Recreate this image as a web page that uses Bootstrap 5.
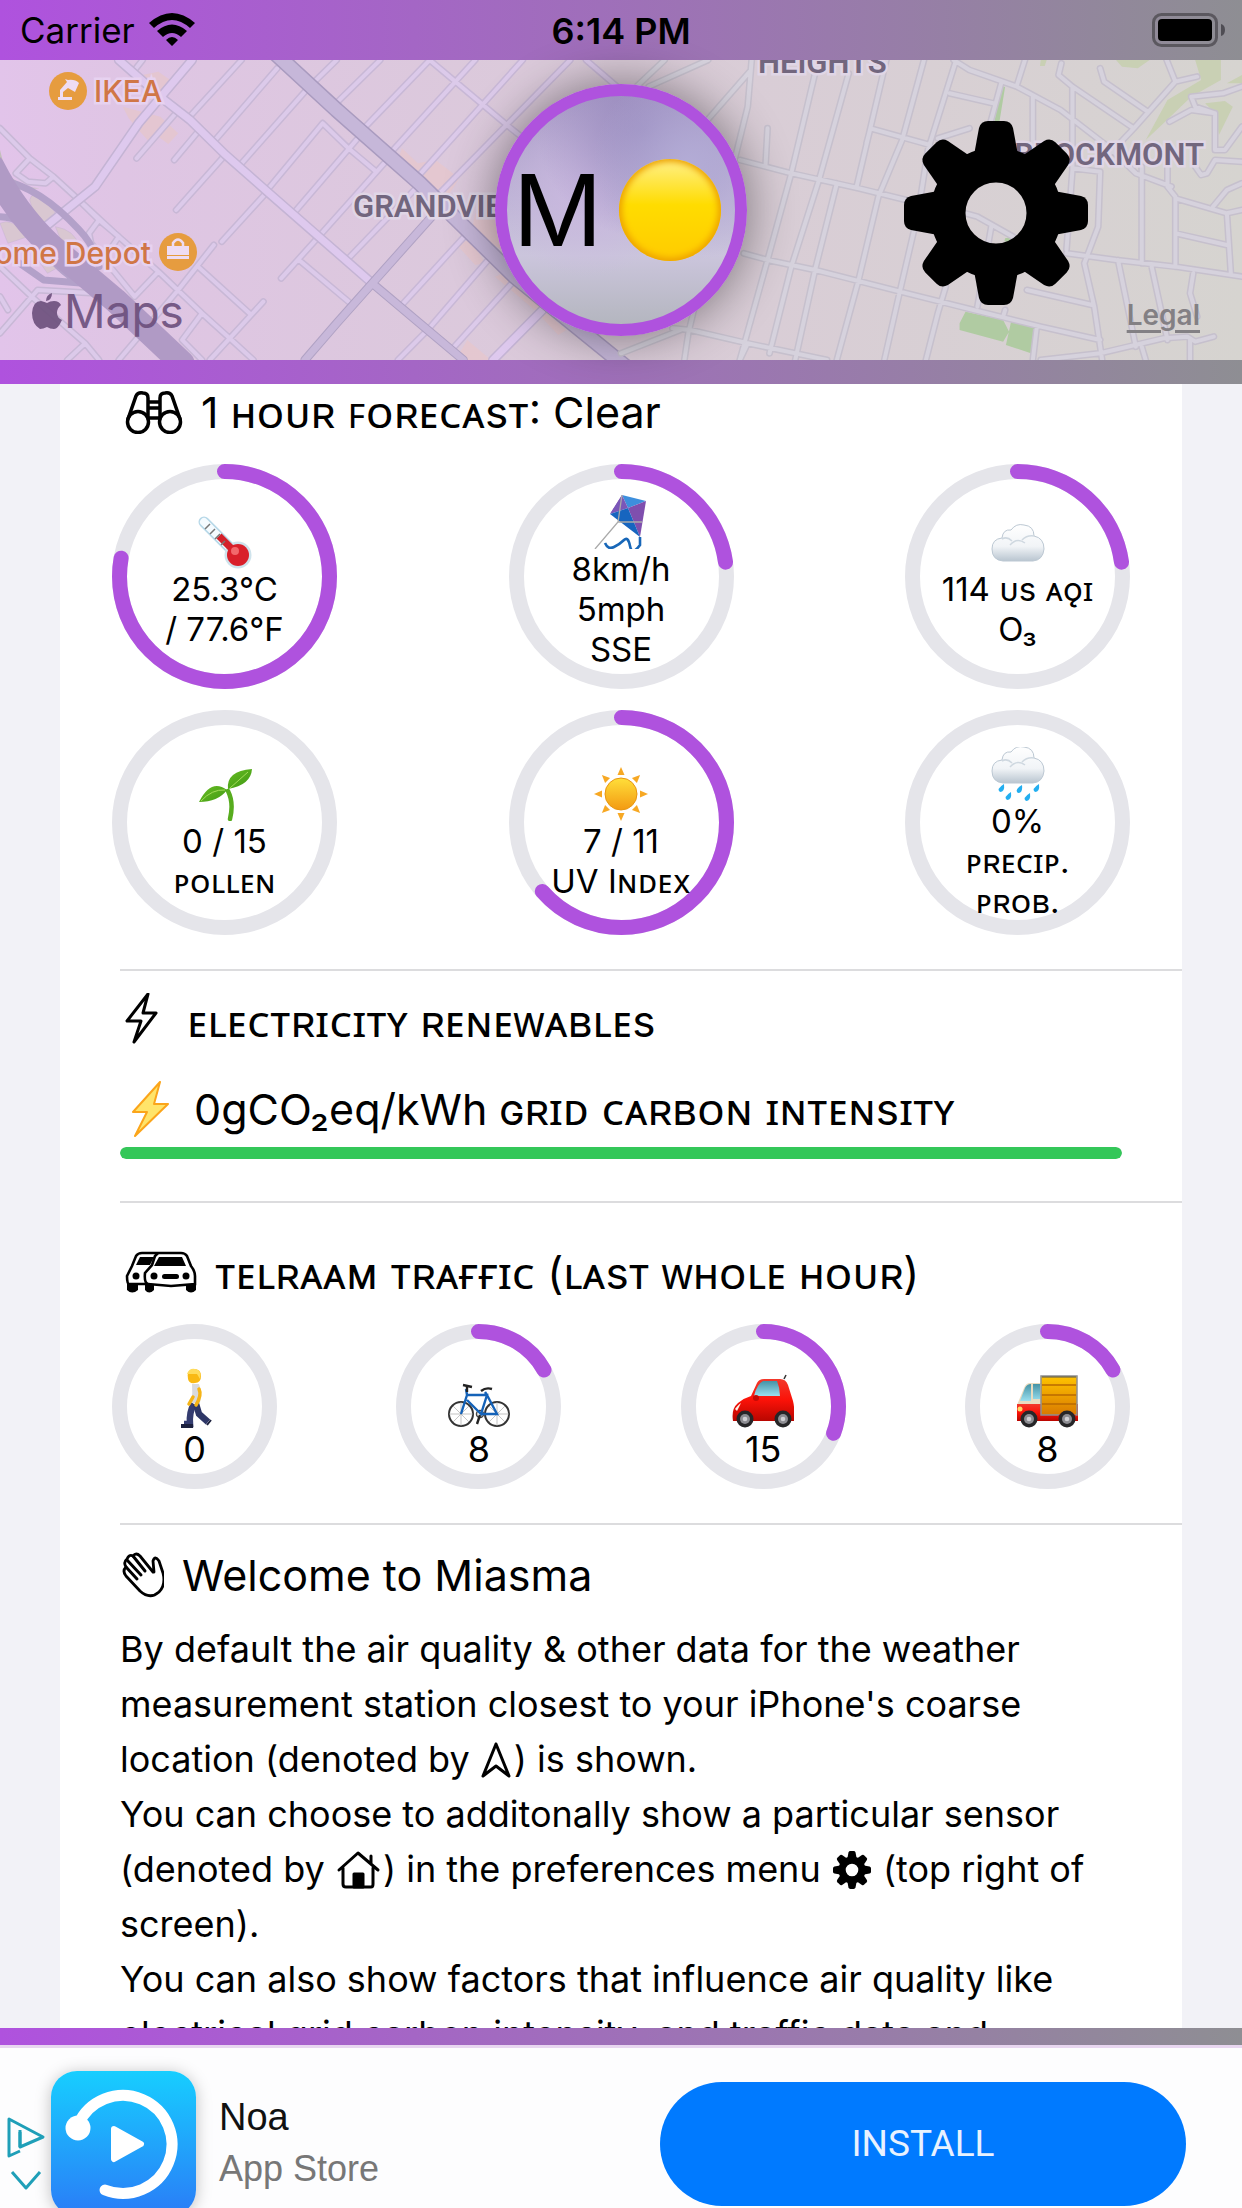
<!DOCTYPE html>
<html lang="en">
<head>
<meta charset="utf-8">
<meta name="viewport" content="width=device-width, initial-scale=1">
<title>Miasma</title>
<link href="https://cdn.jsdelivr.net/npm/bootstrap@5.3.0/dist/css/bootstrap.min.css" rel="stylesheet">
<style>
  :root { --violet: #af52de; --steel: #8e8e93; --track: #e5e5ea; }
  body { font-family: Inter, "Noto Sans", "DejaVu Sans", sans-serif; color: #000; background: #f2f2f7; }
  .tint { background: linear-gradient(90deg, var(--violet), var(--steel)); }
  .status-row { height: 60px; font-size: 35px; line-height: 62px; padding: 0 16px; }
  .status-side { flex: 1 1 0; }
  .status-time { font-size: 36px; }
  .map-area { height: 300px; }
  .map-clip { position: absolute; inset: 0; overflow: hidden; }
  .map-clip svg { width: 100%; height: 100%; display: block; }
  .street { fill: none; vector-effect: non-scaling-stroke; stroke-linecap: round; stroke-linejoin: round; }
  .poi { font: 500 30px Inter, sans-serif; fill: #d07646; stroke: #e7d2f0; stroke-width: 5px; paint-order: stroke; }
  .district { font: 600 31px Roboto, sans-serif; fill: #72667e; stroke: #e0d6e6; stroke-width: 5px; paint-order: stroke; }
  .maps-mark { font: 400 46px Inter, sans-serif; fill: #6c4f7c; }
  .orb { position: absolute; left: 50%; top: 24px; width: 252px; height: 252px; margin-left: -126px; border: 12px solid var(--violet); border-radius: 50%;
    background: radial-gradient(circle at 80% 30%, #b3acd6 0, transparent 40%), radial-gradient(circle at 60% 15%, #9a8cbf 0, transparent 45%), radial-gradient(circle at 35% 40%, #cbb9e0 0, transparent 45%), linear-gradient(#a899c6, #beb4d6 45%, #cbc5dc 70%, #b4b6bf);
    box-shadow: 0 0 50px rgba(0,0,0,.45); font-size: 99px; line-height: 1; padding: 0 14px 0 6px; }
  .moon { width: 102px; height: 102px; border-radius: 50%; background: linear-gradient(#fff08a, #ffdc00 45%, #ffcb00); box-shadow: inset 0 0 6px 3px #eda200; }
  .gear-btn { position: absolute; right: 154px; top: 61px; width: 184px; height: 184px; padding: 0; border: 0; background: none; }
  .legal-link { position: absolute; right: 42px; top: 237px; font-size: 28px; line-height: 36px; font-weight: 600; color: #838084; text-underline-offset: 5px; text-decoration-thickness: 3px; }
  .bar-top { height: 24px; }
  .bar-bottom { height: 17px; }
  .scroller { min-height: 0; overflow: hidden; }
  .panel { background: #fff; margin: 0 60px; }
  .title-row { font-size: 43px; line-height: 60px; padding-left: 60px; gap: 18px; }
  .title-row svg { flex: none; }
  .first-title { line-height: 56px; }
  .caps-text { font-size: 44px; }
  .rings { margin: 0 52px; }
  .ring { position: relative; width: 225px; height: 225px; font-size: 33px; line-height: 40px; text-align: center; }
  .ring-low { padding-top: 12px; }
  .ring-sm { width: 165px; height: 165px; font-size: 36px; padding-top: 22px; }
  .ring > .dial { position: absolute; inset: 0; width: 100%; height: 100%; transform: rotate(-90deg); }
  .dial circle { fill: none; stroke-width: 15; stroke-linecap: round; }
  .dial .base { stroke: var(--track); }
  .dial .val { stroke: var(--violet); }
  .ring > div { position: relative; white-space: nowrap; }
  .glyph { width: 54px; height: 54px; margin-top: 10px; }
  .ring-sm .glyph { width: 62px; height: 62px; margin-top: 0; }
  .rule { margin-left: 60px; height: 2px; background: #dcdcde; }
  .intensity { height: 12px; margin: 8px 60px 42px; border-radius: 6px; background: var(--track); }
  .intensity .progress-bar { background: #34c759; border-radius: 6px; }
  .story { font-size: 36px; line-height: 55px; margin: 17px 56px 0 60px; }
  .story svg { vertical-align: -7px; }
  .promo { height: 163px; background: #fdfdfe; border-top: 3px solid #e8d6f0; font-family: Roboto, sans-serif; padding: 0 56px 0 51px; overflow: hidden; position: relative; }
  .promo-icon { margin-top: 23px; border-radius: 26px; box-shadow: 0 2px 16px rgba(0,0,0,.25); flex: none; }
  .promo-text { margin: 43px 0 0 23px; line-height: 52px; font-family: "Liberation Sans", sans-serif; }
  .promo-name { font-size: 38px; color: #111; }
  .promo-sub { font-size: 36px; color: #777; }
  .install-btn { width: 526px; height: 124px; margin-top: 34px; border: 0; border-radius: 62px; background: #007aff; color: #e8f2ff; font-size: 37px; }
  .choices { position: absolute; left: 6px; top: 68px; }
</style>
</head>
<body>
<svg width="0" height="0" class="position-absolute" aria-hidden="true">
  <defs>
    <path id="tooth" d="M-22-58-17-85Q-15-92-8-92H8Q15-92 17-85L22-58Z"/>
    <symbol id="gear" viewBox="-92 -92 184 184">
      <circle r="48" fill="none" stroke="#000" stroke-width="35"/>
      <use href="#tooth"/><use href="#tooth" transform="rotate(45)"/><use href="#tooth" transform="rotate(90)"/><use href="#tooth" transform="rotate(135)"/>
      <use href="#tooth" transform="rotate(180)"/><use href="#tooth" transform="rotate(225)"/><use href="#tooth" transform="rotate(270)"/><use href="#tooth" transform="rotate(315)"/>
    </symbol>
    <linearGradient id="cloudFill" x2="0" y2="1"><stop offset="0" stop-color="#fff"/><stop offset=".6" stop-color="#f1f4f7"/><stop offset="1" stop-color="#b9c5d0"/></linearGradient>
    <linearGradient id="leafFill" x2="1" y2="1"><stop offset="0" stop-color="#7ccf2a"/><stop offset="1" stop-color="#2f8a0e"/></linearGradient>
    <linearGradient id="sunFill" x2="0" y2="1"><stop offset="0" stop-color="#ffdf3a"/><stop offset="1" stop-color="#f39a12"/></linearGradient>
    <linearGradient id="loadFill" x2="0" y2="1"><stop offset="0" stop-color="#ffc400"/><stop offset="1" stop-color="#d97a00"/></linearGradient>
    <linearGradient id="glassFill" x2="0" y2="1"><stop offset="0" stop-color="#4593a6"/><stop offset="1" stop-color="#9adfee"/></linearGradient>
    <linearGradient id="redFill" x2="0" y2="1"><stop offset="0" stop-color="#f2392c"/><stop offset=".5" stop-color="#fb1208"/><stop offset="1" stop-color="#b80600"/></linearGradient>
    <linearGradient id="appFill" x2="0" y2="1"><stop offset="0" stop-color="#17ceff"/><stop offset="1" stop-color="#2a7cf7"/></linearGradient>
    <linearGradient id="ground" x2="1" y2="0"><stop offset="0" stop-color="#e2c4ea"/><stop offset=".1" stop-color="#dfc5e4"/><stop offset=".5" stop-color="#dacbd8"/><stop offset="1" stop-color="#d6d4d0"/></linearGradient>
    <g id="cloud"><path d="M12 46Q1 45 1 34 1 24 11 23 12 14 20 15 25 8 33 10 43 11 43 21 53 23 53 34 52 45 42 46Z" fill="url(#cloudFill)" stroke="#bcc8d3" stroke-width="1"/><path d="M11 24Q16 21 21 26M19 30Q26 22 34 28M31 25Q36 20 43 21" fill="none" stroke="#cfd8e0" stroke-width="1.5"/></g>
    <g id="wheel"><circle r="8.5" fill="#262628"/><circle r="5" fill="#8d8d92"/><circle r="2.3" fill="#d0d0d4"/></g>
    <path id="streetsWest" class="street" d="M0 385 75 475 135 530 190 590 290 700 400 815 510 940 580 1015 640 1080M610 180 475 355M440 345 345 475M500 395 440 480M700 205 540 425M770 275 610 490M815 370 675 570M900 420 745 635M970 490 805 710M1050 565 880 775M1180 700 1015 915M1240 770 1080 990 1005 1080M1300 840 1140 1050M565 470 445 630M675 575 560 725M805 710 710 835M755 780 880 905M815 370 880 445 950 515M790 250 850 180M840 320 960 180M915 390 1085 180M985 460 1200 180M1055 530 1320 180M1110 580 1440 180M1085 180 1220 315 1290 385 1380 470M1480 180 1568 270M540 735 450 870 300 1080M500 800 630 940M665 905 580 1015 530 1080M400 815 340 890M510 940 460 1020 510 1080M75 475 40 520 70 545 115 550 135 530M190 590 250 660 225 700 230 730 340 890M250 660 300 710 260 780M0 800 80 890 215 1030 250 1080M240 880 95 870 0 1000M215 1030 170 1080M0 890 20 930M360 180 340 210"/>
    <path id="streetsEast" class="street" d="M490 220 430 520 370 780 300 1080M575 220 500 540 430 800 375 1060M670 180 595 560M545 550 490 810 440 1080M765 180 710 420 650 590 600 840 545 1080M845 185 775 450 750 640 705 870 665 1080M960 250 930 380M1020 180 1000 255M840 180 880 210 1000 260 1110 330 1230 440 1300 520 1390 560M830 280 940 310M630 385 780 435M630 385 620 430M880 385 800 415M300 480 430 520 600 565 720 600M310 760 370 780 490 810 705 875 890 930 1060 980 1210 1020M370 385 365 495M110 180 30 270M220 180 70 260M325 215 130 480M330 180 320 320 270 560M130 985 175 990 320 1030 520 1080M200 850 170 1000 160 1080M150 990 0 1060M320 1030 300 1080M1040 290V470M1140 260V510L1125 750M1112 190 1105 225 1140 260 1295 385M1210 205 1220 245 1330 335M1378 180 1400 245 1295 385 1235 460M1400 245 1455 230M1140 505 1210 515 1205 680 1170 790 1195 920 1215 1080M1315 500V790M1380 500V560L1400 590V800M1400 595 1530 640 1568 630M1400 700 1530 735M1530 640 1540 820M1125 760 1250 780 1400 800 1568 830M1255 780 1300 1040M1340 800 1380 1020M1445 820 1437 880 1455 950M1025 870 1190 915M1060 1080 1210 1060 1370 1015 1430 1010 1450 1025 1497 1010M1500 340 1440 330 1385 365M1568 260 1520 280 1440 290 1450 320 1500 340V450L1525 450 1568 380M1450 500 1465 525 1480 520 1500 480 1568 485M870 640 900 650 990 710 1000 740M935 680 900 920M820 860 800 940 770 1080M970 930 965 950M1050 980 1040 1080M1437 1020V1080M1315 1040 1325 1080M1495 620 1530 570 1568 550"/>
  </defs>
</svg>

<div class="vh-100 d-flex flex-column overflow-hidden">
  <header class="position-relative">
    <div class="status-row tint d-flex">
      <div class="status-side d-flex align-items-center gap-3"><span class="ms-1">Carrier</span>
        <svg width="46" height="34" viewBox="2 0 46 34" overflow="visible" aria-label="Wi-Fi"><path d="M0 10Q23-10 46 10L41 15Q23-1 5 15ZM8 18Q23 5 38 18L32 24Q23 16 14 24ZM23 33 17 27Q23 21 29 27Z"/></svg></div>
      <div class="status-time fw-semibold">6:14 PM</div>
      <div class="status-side d-flex align-items-center justify-content-end">
        <svg width="74" height="34" viewBox="0 0 74 34" aria-label="Battery"><rect x="1.5" y="1.5" width="63" height="31" rx="8" fill="none" stroke="#5b585f" stroke-width="3"/><rect x="6" y="6" width="54" height="22" rx="4"/><path d="M69 11Q73 12 73 17T69 23Z" fill="#4f4d54"/></svg></div>
    </div>

    <div class="map-area position-relative">
      <div class="map-clip">
        <svg viewBox="0 60 1242 300" preserveAspectRatio="xMidYMid slice" role="img" aria-label="Map">
          <rect y="60" width="1242" height="300" fill="url(#ground)"/>
          <g transform="scale(.396 .3333)" fill="#e6c7cd" opacity=".8"><path d="M360 225 400 215 430 240 420 290 380 300ZM310 320 405 350 450 400 425 432 400 410 380 430 350 390 325 355ZM1015 445 1055 490 1100 480 1160 535 1130 590 1075 570 1005 480ZM1150 730 1190 720 1225 790 1200 795ZM1200 640 1270 660V750L1190 700ZM1250 830 1290 810 1370 930 1430 990 1410 1005 1350 930ZM1150 1080 1180 1020 1240 1080Z"/><path d="M0 450 15 520 60 560 100 565 30 570 0 500Z" fill="#bdbfb0"/><path d="M75 600Q80 570 110 600 150 640 140 660 110 670 90 660ZM140 680Q190 690 200 740L160 740ZM0 670Q30 650 70 710L20 730ZM90 770Q130 750 150 800L120 820Z" fill="#d8c8cc" stroke="#b6a8ca"/></g>
          <g transform="translate(621) scale(.396 .3333)" fill="#c9d0b4"><path d="M1450 180H1515V240L1440 290 1370 370 1325 420 1380 300 1465 240ZM1475 310 1525 303 1545 320 1510 405 1500 340ZM1250 180H1335L1305 205 1265 200ZM1060 180H1075L1070 198H1058ZM1530 250 1568 225V250Z"/><path fill="#b0cba2" d="M960 260H970L955 370H942ZM855 970 870 935 965 960 980 995 965 1025 855 990ZM985 965 1058 980 1035 1060 972 1035ZM970 715 985 712V728L968 724Z"/></g>
          <g fill="none">
            <g transform="scale(.396 .3333)">
              <use href="#streetsWest" stroke="#c8b8d6" stroke-width="7"/>
              <use href="#streetsWest" stroke="#dccaea" stroke-width="4"/>
              <path class="street" stroke="#c4b4d4" stroke-width="10" d="M300 180 415 300 480 360 570 465 675 575 805 710 940 850M485 180 350 370 240 560 115 680M1370 930 1245 1080"/>
              <path class="street" stroke="#dec9ee" stroke-width="7" d="M300 180 415 300 480 360 570 465 675 575 805 710 940 850M485 180 350 370 240 560 115 680M1370 930 1245 1080"/>
              <path class="street" stroke="#b0a2c4" stroke-width="9" d="M1090 650 940 850 850 970 770 1080M940 850 1080 990 1170 1080"/>
              <path class="street" stroke="#c8b8da" stroke-width="7" d="M1090 650 940 850 850 970 770 1080M940 850 1080 990 1170 1080"/>
              <path class="street" stroke="#a99bbf" stroke-width="16" d="M695 160 850 330 1060 550 1300 830 1580 1100"/>
              <path class="street" stroke="#c6b7d9" stroke-width="13" d="M695 160 850 330 1060 550 1300 830 1580 1100"/>
              <path class="street" stroke="#b3a1c9" stroke-width="7" d="M0 540Q100 560 200 690 240 740 250 800M0 650Q60 650 100 730 150 820 210 850L110 840 50 790"/>
              <path class="street" stroke="#b09ac5" stroke-width="25" d="M-20 500Q40 640 130 740L290 900 460 1090"/>
            </g>
            <g transform="translate(621) scale(.396 .3333)">
              <use href="#streetsEast" stroke="#c6c0cd" stroke-width="7"/>
              <use href="#streetsEast" stroke="#d6d2dd" stroke-width="4"/>
            </g>
          </g>
          <g><circle cx="68" cy="91" r="19" fill="#e69c3f"/><path d="M58 97H72V100H58ZM60 97V90L67 82 65 79 68 80Q75 79 79 83L75 92 68 88 63 92V97Z" fill="#eedcf3"/></g>
          <text class="poi" x="94" y="102">IKEA</text>
          <text class="poi" x="151" y="264" text-anchor="end">Home Depot</text>
          <g><circle cx="178" cy="252" r="19" fill="#e69c3f"/><path d="M167 246H189V255H167ZM167 256H189V259H167Z" fill="#eedcf3"/><path d="M173 246V243Q178 236 183 243V246" fill="none" stroke="#eedcf3" stroke-width="2.5"/></g>
          <text class="district" x="353" y="217">GRANDVIEW</text>
          <text class="district" x="758" y="73">HEIGHTS</text>
          <text class="district" x="1204" y="165" text-anchor="end">BROCKMONT</text>
          <g opacity=".9"><path d="M52 293Q52 300 46 301 46 295 52 293ZM47 303Q50 301 54 301 59 301 61 305 57 308 57 313 57 318 62 320 58 329 54 329 50 329 47 327 43 329 40 329 32 324 32 313 33 301 41 301 45 302 47 303Z" fill="#6c4f7c"/><text class="maps-mark" x="64" y="328">Maps</text></g>
        </svg>
      </div>
      <div class="orb d-flex align-items-center justify-content-between"><span>M</span><span class="moon"></span></div>
      <button class="gear-btn" type="button" aria-label="Preferences"><svg width="184" height="184"><use href="#gear"/></svg></button>
      <a class="legal-link" href="#legal">Legal</a>
    </div>
    <div class="bar-top tint"></div>
  </header>

  <main class="scroller flex-grow-1">
    <div class="panel">
      <h1 class="title-row first-title d-flex align-items-center fw-normal m-0">
        <svg width="63" height="44" viewBox="-4 0 63 44" fill="none" stroke="#000" stroke-width="3.5" stroke-linecap="round"><circle cx="14" cy="32" r="10.5"/><circle cx="46" cy="32" r="10.5"/><path d="M4 29 12 6Q14 2 19 3 24 3 24 8V29M56 29 48 6Q46 2 41 3 36 3 36 8V29M24 12H36M24 18H36M24 28H36"/></svg>
        <span>1 <span class="caps-text">ʜᴏᴜʀ ꜰᴏʀᴇᴄᴀsᴛ</span>: Clear</span>
      </h1>
      <div class="rings d-flex justify-content-between mt-4">
        <div class="ring d-flex flex-column align-items-center justify-content-center">
          <svg class="dial" viewBox="0 0 225 225"><circle class="base" cx="112.5" cy="112.5" r="105"/><circle class="val" cx="112.5" cy="112.5" r="105" pathLength="100" stroke-dasharray="77.8 100"/></svg>
          <svg class="glyph" viewBox="0 0 54 54"><path d="M6 7 40 41" stroke="#b7d8e8" stroke-width="11" stroke-linecap="round"/><path d="M6 7 38 39" stroke="#f5fbff" stroke-width="8" stroke-linecap="round"/><circle cx="40" cy="40" r="13.5" fill="#cfe3ec"/><path d="M21 21 40 40" stroke="#d4202a" stroke-width="7"/><circle cx="40" cy="40" r="11" fill="#d91f2a"/><circle cx="37" cy="36" r="4" fill="#f2686c"/><path d="M7 14 12 9M12 19 17 14M17 24 22 19M23 30 27 26" stroke="#777" stroke-width="1.5"/></svg>
          <div>25.3°C</div><div>/ 77.6°F</div>
        </div>
        <div class="ring d-flex flex-column align-items-center justify-content-center">
          <svg class="dial" viewBox="0 0 225 225"><circle class="base" cx="112.5" cy="112.5" r="105"/><circle class="val" cx="112.5" cy="112.5" r="105" pathLength="100" stroke-dasharray="22.8 100"/></svg>
          <svg class="glyph" viewBox="0 0 54 54"><path d="M28 0 16 19 26 8Z" fill="#8652b5"/><path d="M28 0 52 6 34 13Z" fill="#3d8fdd"/><path d="M28 0 34 13 16 19Z" fill="#7a56b8"/><path d="M52 6 46 42 34 13Z" fill="#7f4fae"/><path d="M34 13 46 42 16 19Z" fill="#1765bf"/><path d="M28 0 24 27 1 54M24 27H48" stroke="#aaa" stroke-width="1.3" fill="none"/><path d="M11 48Q14 55 20 52T30 45 36 51 46 50V42" fill="none" stroke="#1867b8" stroke-width="2.6"/></svg>
          <div>8km/h</div><div>5mph</div><div>SSE</div>
        </div>
        <div class="ring d-flex flex-column align-items-center justify-content-center">
          <svg class="dial" viewBox="0 0 225 225"><circle class="base" cx="112.5" cy="112.5" r="105"/><circle class="val" cx="112.5" cy="112.5" r="105" pathLength="100" stroke-dasharray="22.8 100"/></svg>
          <svg class="glyph" viewBox="0 0 54 54"><use href="#cloud"/></svg>
          <div>114 ᴜs ᴀǫɪ</div><div>O₃</div>
        </div>
      </div>
      <div class="rings d-flex justify-content-between" style="margin-top:21px">
        <div class="ring ring-low d-flex flex-column align-items-center justify-content-center">
          <svg class="dial" viewBox="0 0 225 225"><circle class="base" cx="112.5" cy="112.5" r="105"/></svg>
          <svg class="glyph" viewBox="0 0 54 54"><path d="M30 24Q36 36 32 52" fill="none" stroke="#57ac1e" stroke-width="4.5" stroke-linecap="round"/><path d="M30 22Q28 4 54 2 53 18 30 22ZM29 23Q13 11 1 35 20 35 29 23Z" fill="url(#leafFill)"/><path d="M32 21 50 5M27 23Q14 22 3 34" stroke="#a4dd5a" stroke-width="1" fill="none"/></svg>
          <div>0 / 15</div><div>ᴘᴏʟʟᴇɴ</div>
        </div>
        <div class="ring ring-low d-flex flex-column align-items-center justify-content-center">
          <svg class="dial" viewBox="0 0 225 225"><circle class="base" cx="112.5" cy="112.5" r="105"/><circle class="val" cx="112.5" cy="112.5" r="105" pathLength="100" stroke-dasharray="63.6 100"/></svg>
          <svg class="glyph" viewBox="-27 -27 54 54" fill="#f7a823"><circle r="16" fill="url(#sunFill)" stroke="#e8960f"/><g id="ray2"><path id="ray" d="M-3.5-19 0-27 3.5-19Z"/><use href="#ray" transform="rotate(45)"/></g><use href="#ray2" transform="rotate(90)"/><use href="#ray2" transform="rotate(180)"/><use href="#ray2" transform="rotate(270)"/></svg>
          <div>7 / 11</div><div>UV Iɴᴅᴇx</div>
        </div>
        <div class="ring ring-low d-flex flex-column align-items-center justify-content-center">
          <svg class="dial" viewBox="0 0 225 225"><circle class="base" cx="112.5" cy="112.5" r="105"/></svg>
          <svg class="glyph" viewBox="0 0 54 54"><use href="#cloud" y="-10"/><g fill="#22aef0"><path id="drop" d="M13 37Q14 45 9 45 5 42 13 37Z"/><use href="#drop" x="7" y="8"/><use href="#drop" x="18" y="1"/><use href="#drop" x="26" y="9"/><use href="#drop" x="35"/></g></svg>
          <div>0%</div><div>ᴘʀᴇᴄɪᴘ.</div><div>ᴘʀᴏʙ.</div>
        </div>
      </div>
      <div class="rule" style="margin-top:34px"></div>

      <h2 class="title-row d-flex align-items-center fw-normal mb-0" style="margin-top:20px">
        <svg width="49" height="56" viewBox="-5 2 49 56" fill="none" stroke="#000" stroke-width="3" stroke-linejoin="round"><path d="M23 3 2 30H16L9 51 31 22H18Z"/></svg>
        <span class="caps-text">ᴇʟᴇᴄᴛʀɪᴄɪᴛʏ ʀᴇɴᴇᴡᴀʙʟᴇs</span>
      </h2>
      <div class="title-row d-flex align-items-center" style="margin-top:28px">
        <svg width="56" height="56" viewBox="-10 0 56 56"><path d="M30 1 3 31H17L5 55 38 23H24Z" fill="#ffe46a" stroke="#fba51a" stroke-width="2" stroke-linejoin="round"/></svg>
        <span>0gCO₂eq/kWh <span class="caps-text">ɢʀɪᴅ ᴄᴀʀʙᴏɴ ɪɴᴛᴇɴsɪᴛʏ</span></span>
      </div>
      <div class="intensity progress" role="progressbar" aria-label="Grid carbon intensity" aria-valuenow="100" aria-valuemin="0" aria-valuemax="100"><div class="progress-bar" style="width:100%"></div></div>
      <div class="rule"></div>

      <h2 class="title-row d-flex align-items-center fw-normal mb-0" style="margin-top:40px">
        <svg width="77" height="44" viewBox="-6 0 77 44"><path d="M1 30H12V39Q6 44 1 39ZM19 30H28V39Q23 44 19 39ZM60 30H70V39Q65 44 60 39Z"/><path d="M20 33H3Q1 33 1 25L6 15 10 5Q12 2 16 2H55Q59 2 61 5L65 15Q69 20 69 25V33L45 35 22 33" fill="#fff" stroke="#000" stroke-width="2.6"/><path d="M22 33Q18 32 19 22L26 14 29 5 32 2" fill="none" stroke="#000" stroke-width="2.6"/><path d="M14 6H28L24 14H10ZM33 6H56L60 15H28Z"/><circle cx="10" cy="25" r="3.5"/><circle cx="28" cy="25" r="3.5"/><circle cx="60" cy="25" r="3.5"/><rect x="36" y="23" width="17" height="5" rx="2.5"/></svg>
        <span class="caps-text">ᴛᴇʟʀᴀᴀᴍ ᴛʀᴀғғɪᴄ (ʟᴀsᴛ ᴡʜᴏʟᴇ ʜᴏᴜʀ)</span>
      </h2>
      <div class="rings d-flex justify-content-between" style="margin-top:21px">
        <div class="ring ring-sm d-flex flex-column align-items-center justify-content-center">
          <svg class="dial" viewBox="0 0 165 165"><circle class="base" cx="82.5" cy="82.5" r="75"/></svg>
          <svg class="glyph" viewBox="0 0 62 62"><path d="M24 12Q22 3 30 2 37 2 37 9 37 16 31 16 25 17 24 12Z" fill="#f9b914"/><path d="M23 7Q25 1 31 2 38 3 36 12L33 7Z" fill="#ffdc5c"/><path d="M30 37Q25 45 26 57H20" fill="none" stroke="#343c70" stroke-width="6.5"/><path d="M32 37 35 47 44 55" fill="none" stroke="#2e3767" stroke-width="6.5"/><path d="M28 17H35Q38 24 36 36H27Q29 26 28 17Z" fill="#d9dade"/><path d="M35 22Q38 28 32 38M29 30 25 37" fill="none" stroke="#f5b417" stroke-width="3.5" stroke-linecap="round"/><path d="M18 58H28V60H18ZM43 58 47 53" fill="#1b203d" stroke="#1b203d" stroke-width="2"/></svg>
          <div>0</div>
        </div>
        <div class="ring ring-sm d-flex flex-column align-items-center justify-content-center">
          <svg class="dial" viewBox="0 0 165 165"><circle class="base" cx="82.5" cy="82.5" r="75"/><circle class="val" cx="82.5" cy="82.5" r="75" pathLength="100" stroke-dasharray="16.9 100"/></svg>
          <svg class="glyph" viewBox="0 0 62 62" fill="none"><g stroke="#333" stroke-width="2"><circle cx="13" cy="47" r="12"/><circle cx="49" cy="47" r="12"/></g><g stroke="#aaa" stroke-width=".7"><path d="M1 47H25M13 35V59M5 39 21 55M21 39 5 55M37 47H61M49 35V59M41 39 57 55M57 39 41 55"/></g><circle cx="32" cy="47" r="3.5" stroke="#444" stroke-width="1.5"/><path d="M13 47 19 28 18 22M19 28H39L33 47 19 33M39 28 49 47H33M39 28 37 25" stroke="#1462b8" stroke-width="2.4"/><path d="M15 18 24 20M19 20V25M33 24Q38 20 44 22M32 48 29 57" stroke="#222" stroke-width="2.4"/></svg>
          <div>8</div>
        </div>
        <div class="ring ring-sm d-flex flex-column align-items-center justify-content-center">
          <svg class="dial" viewBox="0 0 165 165"><circle class="base" cx="82.5" cy="82.5" r="75"/><circle class="val" cx="82.5" cy="82.5" r="75" pathLength="100" stroke-dasharray="30.8 100"/></svg>
          <svg class="glyph" viewBox="0 0 62 62"><path d="M52 12 54 8" stroke="#333" stroke-width="1.5"/><path d="M1 54Q-1 42 6 36 12 31 19 29L25 16Q27 12 32 12H48Q54 12 56 18L61 34Q63 42 62 54Z" fill="url(#redFill)"/><path d="M22 29Q25 17 31 14H45Q48 21 48 29Z" fill="url(#glassFill)"/><path d="M3 42Q7 37 9 36L5 44Z" fill="#fff3e8"/><circle cx="24" cy="31" r="3" fill="#c40a05"/><use href="#wheel" x="13" y="52"/><use href="#wheel" x="51" y="52"/></svg>
          <div>15</div>
        </div>
        <div class="ring ring-sm d-flex flex-column align-items-center justify-content-center">
          <svg class="dial" viewBox="0 0 165 165"><circle class="base" cx="82.5" cy="82.5" r="75"/><circle class="val" cx="82.5" cy="82.5" r="75" pathLength="100" stroke-dasharray="16.9 100"/></svg>
          <svg class="glyph" viewBox="0 0 62 62"><path d="M1 54V38L8 21Q10 16 14 16H27V44H1Z" fill="#e9dcc0"/><path d="M4 34 9 21Q11 17 15 17V34ZM17 17H24V32H17Z" fill="url(#glassFill)"/><path d="M1 37H62V54H1Z" fill="url(#redFill)"/><path d="M25 9H61V48H25Z" fill="url(#loadFill)" stroke="#8e8e90" stroke-width="1.5"/><path d="M26 18H60M26 28H60M26 37H60" stroke="#b96a00" stroke-width="1.3"/><path d="M26 10H60" stroke="#555" stroke-width="1"/><path d="M41 50Q51 38 61 50Z" fill="#dc140c"/><circle cx="4" cy="42" r="2.5" fill="#ffd86a"/><use href="#wheel" x="13" y="52"/><use href="#wheel" x="51" y="52"/></svg>
          <div>8</div>
        </div>
      </div>
      <div class="rule" style="margin-top:34px"></div>

      <h2 class="title-row d-flex align-items-center fw-normal mb-0" style="margin-top:20px">
        <svg width="44" height="46" viewBox="-2 0 44 46" fill="none" stroke="#000" stroke-width="3" stroke-linejoin="round" stroke-linecap="round"><path d="M31 20 18 4Q14 0 11 4 7 2 5 7 1 10 4 15 0 19 4 24L18 39Q28 48 37 40 44 33 41 21L37 9Q33 3 31 9L32 20Z" stroke-width="2.8"/><path d="M11 4 23 19M5 8 19 23M4 15 15 27"/></svg>
        <span>Welcome to Miasma</span>
      </h2>
      <div class="story">
        By default the air quality &amp; other data for the weather measurement station closest to your iPhone's coarse location (denoted by <svg width="34" height="38" viewBox="0 0 34 38" fill="none" stroke="#000" stroke-width="3" stroke-linejoin="round"><path d="M16 3 3 35 16 25 29 35Z"/></svg>) is shown.<br>
        You can choose to additonally show a particular sensor (denoted by <svg width="48" height="38" viewBox="-2 0 48 38" fill="none" stroke="#000" stroke-width="3" stroke-linejoin="round" stroke-linecap="round"><path d="M2 19 21 2 41 19M34 12V5M6 17V33Q6 36 9 36H34Q36 36 36 33V17"/><path d="M17 36V23H26V36Z" fill="#000"/></svg>) in the preferences menu <svg width="42" height="38"><use href="#gear" width="38" height="38" x="2"/></svg> (top right of screen).<br>
        You can also show factors that influence air quality like electrical grid carbon intensity, and traffic data and
      </div>
    </div>
  </main>

  <div class="bar-bottom tint flex-shrink-0"></div>
  <footer class="promo d-flex align-items-start flex-shrink-0">
    <svg class="choices" width="40" height="96" viewBox="0 0 40 96" fill="none" stroke="#1f9fb8" stroke-width="3" stroke-linejoin="round"><path d="M3 31V3L37 21 14 31V14M3 31V40L14 35"/><path d="M14 16V31M6 56 20 72 34 56"/></svg>
    <svg class="promo-icon" width="145" height="145" viewBox="0 0 145 145"><rect width="145" height="145" fill="url(#appFill)"/><path d="M27 54A49 49 0 1 1 54 119" fill="none" stroke="#fff" stroke-width="11" stroke-linecap="round"/><circle cx="27" cy="57" r="12.5" fill="#fff"/><path d="M63 58 90 73 63 88Z" fill="#fff" stroke="#fff" stroke-width="6" stroke-linejoin="round"/></svg>
    <div class="promo-text"><div class="promo-name">Noa</div><div class="promo-sub">App Store</div></div>
    <button class="install-btn ms-auto" type="button">INSTALL</button>
  </footer>
</div>
<script src="https://cdn.jsdelivr.net/npm/bootstrap@5.3.0/dist/js/bootstrap.bundle.min.js"></script>
</body>
</html>
